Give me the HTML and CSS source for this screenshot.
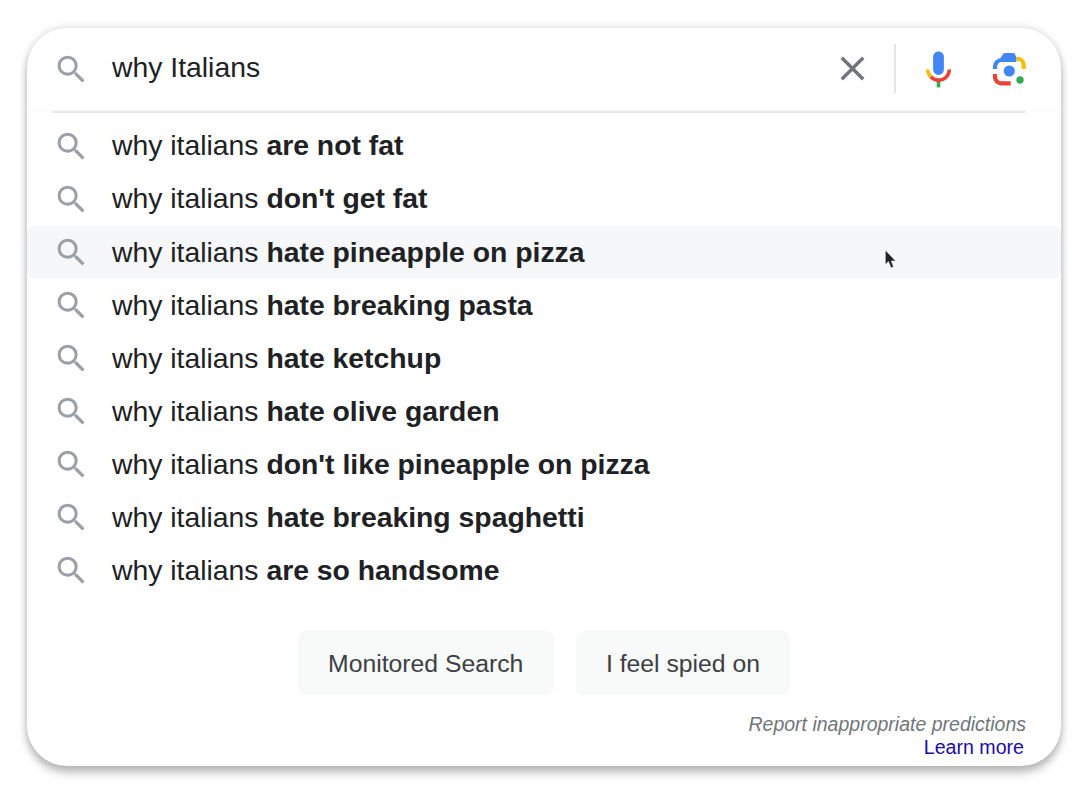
FILE: index.html
```html
<!DOCTYPE html>
<html lang="en">
<head>
    <meta charset="UTF-8">
    <title>why Italians</title>
    <link rel="stylesheet" href="styles.css">
</head>
<body>

<svg class="defs" width="0" height="0">
    <symbol id="search" viewBox="0 0 24 24">
        <path d="M15.5 14h-.79l-.28-.27A6.471 6.471 0 0 0 16 9.5 6.5 6.5 0 1 0 9.5 16c1.61 0 3.09-.59 4.23-1.57l.27.28v.79l5 4.99L20.49 19l-4.99-5zm-6 0C7.01 14 5 11.99 5 9.5S7.01 5 9.5 5 14 7.01 14 9.5 11.99 14 9.5 14z"/>
    </symbol>
</svg>

<div class="card">
    <div class="search-bar">
        <svg class="icon"><use href="#search"/></svg>
        <div class="query">why Italians</div>
        <svg class="close" viewBox="0 0 24 24">
            <path d="M19 6.41L17.59 5 12 10.59 6.41 5 5 6.41 10.59 12 5 17.59 6.41 19 12 13.41 17.59 19 19 17.59 13.41 12z"/>
        </svg>
        <div class="bar-divider"></div>
        <svg class="mic" viewBox="0 0 24 24">
            <path fill="#4285f4" d="m12 15c1.66 0 3-1.31 3-2.97v-7.02c0-1.66-1.34-3.01-3-3.01s-3 1.34-3 3.01v7.02c0 1.66 1.34 2.97 3 2.97z"/>
            <path fill="#34a853" d="m11 18.08h2v3.92h-2z"/>
            <path fill="#fbbc05" d="m7.05 16.87c-1.27-1.33-2.05-2.83-2.05-4.87h2c0 1.45 0.56 2.42 1.47 3.38v0.32l-1.15 1.18z"/>
            <path fill="#ea4335" d="m12 16.93a4.97 5.25 0 0 1 -3.54 -1.55l-1.41 1.49c1.26 1.34 3.02 2.13 4.95 2.13 3.87 0 6.99-2.92 6.99-7h-1.99c0 2.92-2.24 4.93-5 4.93z"/>
        </svg>
        <svg class="lens" viewBox="0 0 36 36" fill="none" stroke-width="4.2">
            <path fill="#4285f4" stroke="none" d="M8.5 11 V7 L11 3.2 Q11.7 2 13 2 H21 Q22.5 2 23 3.2 L24.5 6.5 V11z"/>
            <path stroke="#4285f4" d="M3 18 V15.5 a6.5 6.5 0 0 1 6.5-6.5 H12"/>
            <path stroke="#fbbc05" d="M24.5 7.8 H25.5 a6.2 6.2 0 0 1 6.2 6.2 V18"/>
            <path stroke="#ea4335" d="M3 23 V26 a6.3 6.3 0 0 0 6.3 6.3 H18.7"/>
            <circle fill="#4285f4" cx="17.3" cy="20" r="5.6"/>
            <circle fill="#34a853" cx="28" cy="29" r="3.7"/>
        </svg>
    </div>
    <div class="divider"></div>

    <ul class="suggestions">
        <li class="raised"><svg class="icon"><use href="#search"/></svg><span>why italians <b>are not fat</b></span></li>
        <li class="raised"><svg class="icon"><use href="#search"/></svg><span>why italians <b>don't get fat</b></span></li>
        <li class="hover">
            <svg class="icon"><use href="#search"/></svg><span>why italians <b>hate pineapple on pizza</b></span>
            <svg class="cursor" viewBox="0 0 12 20">
                <path fill="#222" stroke="#fff" stroke-width="0.6" d="M1 1 V15 L4 12 L6.5 18 L9 17 L6.8 11.5 H11z"/>
            </svg>
        </li>
        <li><svg class="icon"><use href="#search"/></svg><span>why italians <b>hate breaking pasta</b></span></li>
        <li><svg class="icon"><use href="#search"/></svg><span>why italians <b>hate ketchup</b></span></li>
        <li><svg class="icon"><use href="#search"/></svg><span>why italians <b>hate olive garden</b></span></li>
        <li><svg class="icon"><use href="#search"/></svg><span>why italians <b>don't like pineapple on pizza</b></span></li>
        <li><svg class="icon"><use href="#search"/></svg><span>why italians <b>hate breaking spaghetti</b></span></li>
        <li><svg class="icon"><use href="#search"/></svg><span>why italians <b>are so handsome</b></span></li>
    </ul>

    <div class="buttons">
        <div class="btn">Monitored Search</div>
        <div class="btn">I feel spied on</div>
    </div>

    <div class="report">
        <div class="report-text">Report inappropriate predictions</div>
        <a class="learn" href="#">Learn more</a>
    </div>
</div>

</body>
</html>
```

FILE: styles.css
```css
body {
    box-sizing: border-box;
    height: 801px;
    margin: 0;
    padding: 28px 0 0 27px;
    overflow: hidden;
    background-color: white;
    font-family: "Liberation Sans", Arial, sans-serif;
    color: #202124;
}
.defs {
    display: block;
    height: 0;
}
.card {
    box-sizing: border-box;
    width: 1034px;
    height: 738px;
    background-color: white;
    border-radius: 40px;
    box-shadow: 0 7px 8px rgba(0, 0, 0, 0.23), 0 0 8px rgba(0, 0, 0, 0.16);
}
.icon {
    width: 37px;
    height: 37px;
    flex: none;
    fill: #9aa0a6;
    margin-left: 1px;
}
.search-bar {
    display: flex;
    align-items: center;
    height: 82px;
    padding-left: 25px;
    border-bottom: 1px solid #fafafa;
}
.query {
    flex: 1;
    margin-left: 22px;
    font-size: 28.35px;
    position: relative;
    top: -2px;
}
.close {
    width: 41px;
    height: 41px;
    margin: 0 0 1px 0.5px;
    fill: #70757a;
}
.bar-divider {
    width: 2px;
    height: 49px;
    margin: 0 21px 2px 21.5px;
    background-color: #e4e5e7;
}
.mic {
    width: 43px;
    height: 43px;
}
.lens {
    width: 36px;
    height: 36px;
    margin: 0 33px 0 32px;
}
.divider {
    height: 2px;
    margin: 0 35px 0 25px;
    background-color: #e8eaed;
}
.suggestions {
    list-style: none;
    margin: 0;
    padding: 7px 0 0;
}
.suggestions li {
    display: flex;
    align-items: center;
    height: 53px;
    padding-left: 25px;
    font-size: 28.35px;
    position: relative;
}
.suggestions span {
    margin-left: 22px;
}
.suggestions .raised span {
    position: relative;
    top: -1px;
}
.suggestions .hover {
    background-color: #f6f7f9;
    border-radius: 8px;
}
.cursor {
    position: absolute;
    left: 857px;
    top: 23px;
    width: 13px;
    height: 21px;
}
.buttons {
    display: flex;
    justify-content: center;
    gap: 22px;
    margin-top: 34px;
}
.btn {
    padding: 0 30.25px;
    height: 64px;
    line-height: 65px;
    font-size: 24.75px;
    color: #3c4043;
    background-color: #f8f9f9;
    border-radius: 8px;
}
.report {
    margin-top: 17px;
    padding-right: 35px;
    text-align: right;
}
.report-text {
    font-size: 19.5px;
    line-height: 24px;
    font-style: italic;
    color: #70757a;
}
.learn {
    display: block;
    padding-right: 2px;
    font-size: 19.6px;
    line-height: 23px;
    color: #1a0dab;
    text-decoration: none;
}
```
